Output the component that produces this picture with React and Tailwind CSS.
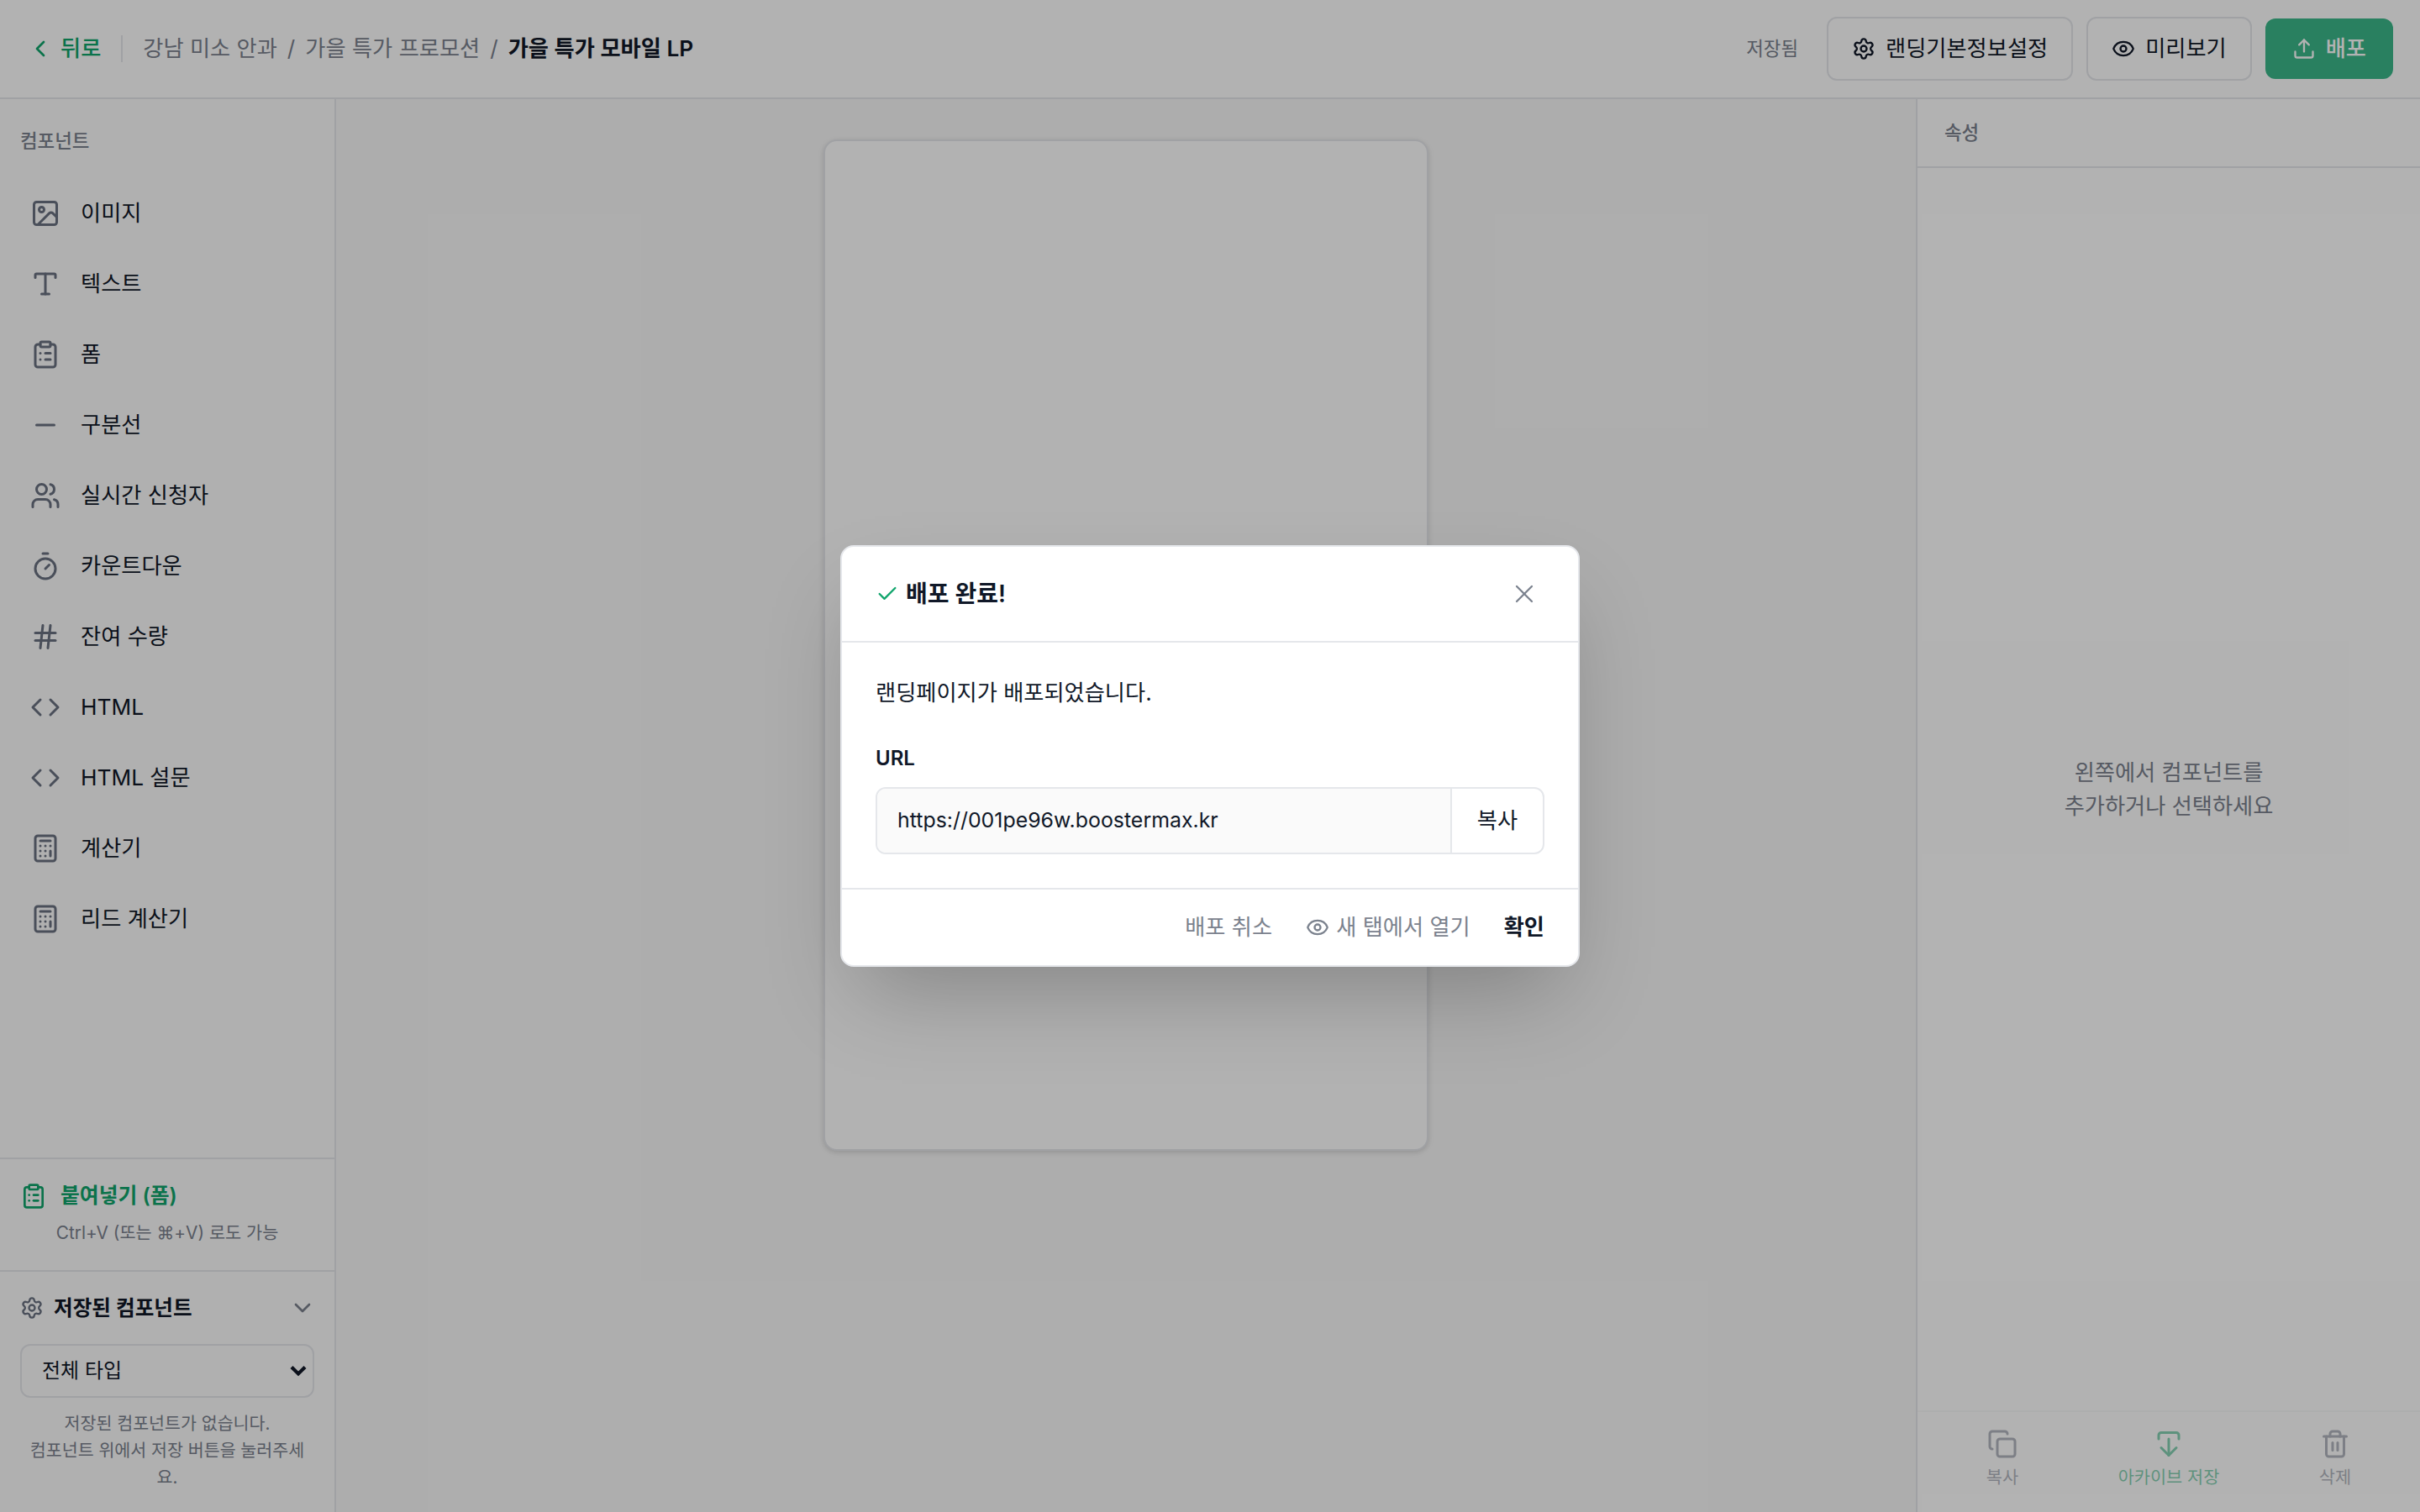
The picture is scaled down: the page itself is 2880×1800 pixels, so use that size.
import React from "react";
import { ChevronLeft, ChevronDown, Settings, Eye, Upload, Image, Type, ClipboardList, Minus, Users, Timer, Hash, Code, Calculator, Check, X, Copy, Trash2 } from "lucide-react";

const items = [
  [Image, "이미지"], [Type, "텍스트"], [ClipboardList, "폼"], [Minus, "구분선"], [Users, "실시간 신청자"], [Timer, "카운트다운"],
  [Hash, "잔여 수량"], [Code, "HTML"], [Code, "HTML 설문"], [Calculator, "계산기"], [Calculator, "리드 계산기"],
];

export default function App() {
  return (
    <div className="[zoom:2] relative w-[1440px] h-[900px] overflow-hidden flex flex-col bg-white text-gray-900 font-['Inter','Noto_Sans_CJK_KR',sans-serif] text-[13.12px]">
      <header className="h-[59px] shrink-0 flex items-center justify-between border-b border-gray-200 pl-4 pr-4">
        <div className="flex items-center">
          <div className="flex items-center gap-1 text-[#10a56c] font-medium"><ChevronLeft size={16} /><span>뒤로</span></div>
          <div className="w-px h-4 bg-gray-200 mx-3" />
          <div className="flex items-center gap-1.5 text-[#7b828e]">
            <span>강남 미소 안과</span><span>/</span><span>가을 특가 프로모션</span><span>/</span>
            <span className="font-semibold text-gray-900">가을 특가 모바일 LP</span>
          </div>
        </div>
        <div className="flex items-center gap-2">
          <span className="text-[11.2px] text-[#7b828e] mr-[9px]">저장됨</span>
          <button className="h-[38px] px-[14px] flex items-center gap-1.5 border border-gray-200 rounded-md"><Settings size={14} />랜딩기본정보설정</button>
          <button className="h-[38px] px-[14px] flex items-center gap-1.5 border border-gray-200 rounded-md"><Eye size={14} />미리보기</button>
          <button className="h-9 px-4 flex items-center gap-1.5 rounded-md bg-[#3bb88a] text-white font-medium"><Upload size={14} />배포</button>
        </div>
      </header>
      <div className="flex-1 flex min-h-0">
        <aside className="w-[200px] shrink-0 flex flex-col border-r border-gray-200 bg-[#fcfcfc]">
          <div className="px-3 pt-[17px] pb-[14px] text-[11.2px] font-medium leading-4 text-[#7b828e]">컴포넌트</div>
          <div className="flex-1">
            {items.map(([Icon, label], i) => (
              <div key={i} className="h-[42px] flex items-center gap-3 pl-[18px]">
                <Icon size={18} className="text-gray-500" strokeWidth={2} />
                <span>{label}</span>
              </div>
            ))}
          </div>
          <div className="h-[67px] border-t border-gray-200 flex flex-col items-center">
            <div className="w-full flex items-center gap-2 pl-3 pt-[11px] text-[#10a56c] font-semibold text-[12.4px] h-[33px]"><ClipboardList size={16} /><span>붙여넣기 (폼)</span></div>
            <div className="text-[10.4px] text-[#7b828e] mt-[3px]">Ctrl+V (또는 ⌘+V) 로도 가능</div>
          </div>
          <div className="h-[144px] border-t border-gray-200 px-3 flex flex-col">
            <div className="h-[43px] flex items-center gap-1.5 shrink-0">
              <Settings size={14} className="text-gray-500" />
              <span className="font-semibold text-[12.3px]">저장된 컴포넌트</span>
              <ChevronDown size={16} className="ml-auto text-[#7b828e] mr-[-1px]" />
            </div>
            <div className="relative shrink-0">
              <select className="appearance-none block h-8 w-full rounded-md border border-gray-200 px-3 text-xs">
                <option>전체 타입</option>
              </select>
              <svg className="absolute right-[4.5px] top-[12.5px]" width="10" height="7" viewBox="0 0 10 7" fill="none" stroke="#111827" strokeWidth="2.1"><path d="m1 1.2 4 4 4-4" /></svg>
            </div>
            <p className="mt-[7.5px] text-center text-[10.3px] leading-4 text-[#7b828e]">저장된 컴포넌트가 없습니다.<br />컴포넌트 위에서 저장 버튼을 눌러주세요.</p>
          </div>
        </aside>
        <main className="flex-1 bg-[#f8f8f8] pt-6 flex justify-center">
          <div className="w-[360px] h-[602px] bg-white rounded-lg border border-gray-200 shadow-[0_1px_3px_rgba(0,0,0,0.15)]" />
        </main>
        <aside className="w-[300px] shrink-0 flex flex-col border-l border-gray-200">
          <div className="h-[41px] flex items-center px-4 border-b border-gray-200 text-[11.2px] font-medium text-[#7b828e]">속성</div>
          <div className="flex-1 flex items-center justify-center text-center text-[#7b828e] leading-normal">왼쪽에서 컴포넌트를<br />추가하거나 선택하세요</div>
          <div className="h-[60.5px] border-t border-gray-100 grid grid-cols-3 px-px opacity-50 pt-[10px] text-[10.4px] text-gray-500">
            <div className="flex flex-col items-center gap-[3px]"><Copy size={18} /><span>복사</span></div>
            <div className="flex flex-col items-center gap-[3px] text-[#10a56c]">
              <svg width="18" height="18" viewBox="0 0 24 24" fill="none" stroke="currentColor" strokeWidth="2" strokeLinecap="round" strokeLinejoin="round"><path d="M4 8V5a2 2 0 0 1 2-2h12a2 2 0 0 1 2 2v3" /><path d="M12 8v13" /><path d="m6 15 6 6 6-6" /></svg>
              <span>아카이브 저장</span>
            </div>
            <div className="flex flex-col items-center gap-[3px]"><Trash2 size={18} /><span>삭제</span></div>
          </div>
        </aside>
      </div>
      <div className="absolute inset-0 bg-black/30 flex items-center justify-center">
        <div className="w-[440px] bg-white rounded-lg border border-gray-200 shadow-2xl">
          <div className="h-[57px] flex items-center justify-between px-5 border-b border-gray-200">
            <div className="flex items-center gap-1 text-sm font-semibold"><Check size={14} className="text-[#10a56c]" />배포 완료!</div>
            <X size={18} className="text-[#7b828e] mr-[3px]" strokeWidth={1.5} />
          </div>
          <div className="px-5 pt-5 h-[146px]">
            <p className="leading-[19.5px] mb-5">랜딩페이지가 배포되었습니다.</p>
            <div className="text-xs font-semibold leading-[18.5px] mb-2">URL</div>
            <div className="h-10 flex border border-gray-200 rounded-md overflow-hidden">
              <div className="flex-1 bg-[#fafafa] flex items-center px-3 border-r border-gray-200 text-[12.45px]">https://001pe96w.boostermax.kr</div>
              <div className="w-[54px] flex items-center justify-center">복사</div>
            </div>
          </div>
          <div className="h-[46px] border-t border-gray-200 flex items-center justify-end gap-5 px-5 text-[#7b828e]">
            <span>배포 취소</span>
            <span className="flex items-center gap-1"><Eye size={14} />새 탭에서 열기</span>
            <span className="text-gray-900 font-semibold">확인</span>
          </div>
        </div>
      </div>
    </div>
  );
}
